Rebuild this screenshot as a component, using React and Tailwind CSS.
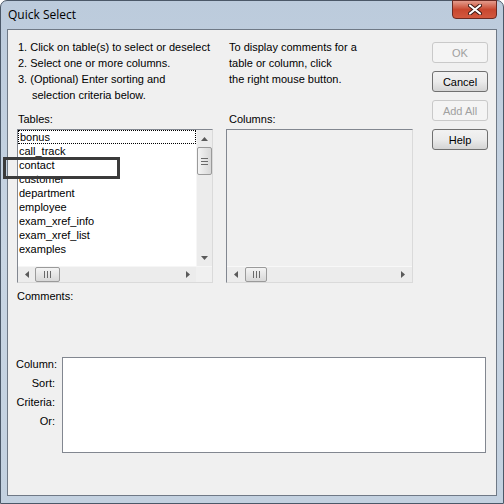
import React from 'react';

const tables = ['bonus', 'call_track', 'contact', 'customer', 'department', 'employee', 'exam_xref_info', 'exam_xref_list', 'examples'];

const Arrow = ({ dir }) => {
    const pts = {
        up: '0,4 3.5,0 7,4',
        down: '0,0 7,0 3.5,4',
        left: '4,0 4,7 0,3.5',
        right: '0,0 0,7 4,3.5',
    }[dir];
    const vertical = dir === 'up' || dir === 'down';
    return (
        <svg width={vertical ? 7 : 4} height={vertical ? 4 : 7} viewBox={vertical ? '0 0 7 4' : '0 0 4 7'}>
            <polygon points={pts} fill="#5a5a5a" />
        </svg>
    );
};

const VThumb = () => (
    <div className="w-[15px] h-[28px] rounded-[2px] border border-[#9a9a9a] bg-gradient-to-r from-[#f4f4f4] to-[#d8d8d8] flex flex-col items-center justify-center gap-[2px]">
        <div className="w-[7px] h-px bg-[#6a6a6a]"></div>
        <div className="w-[7px] h-px bg-[#6a6a6a]"></div>
        <div className="w-[7px] h-px bg-[#6a6a6a]"></div>
    </div>
);

const HThumb = ({ w }) => (
    <div className={`${w} h-[15px] rounded-[2px] border border-[#9a9a9a] bg-gradient-to-b from-[#f4f4f4] to-[#d8d8d8] flex items-center justify-center gap-[2px]`}>
        <div className="w-px h-[7px] bg-[#6a6a6a]"></div>
        <div className="w-px h-[7px] bg-[#6a6a6a]"></div>
        <div className="w-px h-[7px] bg-[#6a6a6a]"></div>
    </div>
);

const Button = ({ children, disabled }) => (
    <div className={`w-[56px] h-[21px] rounded-[3px] border flex items-center justify-center ${disabled ? 'border-[#c9c9c9] bg-[#f4f4f4] text-[#a0a0a0]' : 'border-[#707070] bg-gradient-to-b from-[#f2f2f2] via-[#ebebeb] to-[#d4d4d4] text-black'}`}>
        {children}
    </div>
);

export default function App() {
    return (
        <div className="w-[504px] h-[504px] relative overflow-hidden font-['Liberation_Sans',Arial,sans-serif] text-[11px] leading-[16px] text-black whitespace-nowrap">
            <div className="w-full h-full rounded-t-[7px] border border-[#4b5868] bg-gradient-to-b from-[#bccbdc] via-[#c8d5e3] to-[#c3d1e0] flex flex-col">
                {/* Title bar */}
                <div className="h-[28px] flex items-start justify-between shrink-0">
                    <div className="pl-[7px] pt-[6px] text-[12px] leading-[16px] font-['Open_Sans',sans-serif]">Quick Select</div>
                    <div className="w-[45px] h-[19px] mr-[6px] -mt-px rounded-b-[4px] border border-[#6b2a22] bg-gradient-to-b from-[#e39b8c] via-[#c8472f] to-[#d2583e] flex items-center justify-center">
                        <svg width="14" height="11" viewBox="0 0 14 11">
                            <path d="M2 1.5 L12 9.5 M12 1.5 L2 9.5" stroke="#3a1712" strokeWidth="4" strokeLinecap="round" />
                            <path d="M2 1.5 L12 9.5 M12 1.5 L2 9.5" stroke="#ffffff" strokeWidth="2.2" strokeLinecap="round" />
                        </svg>
                    </div>
                </div>

                {/* Client area */}
                <div className="mx-[6px] mb-[7px] flex-1 border border-[#6f7986] bg-[#f0f0f0] flex flex-col pl-[9px] pt-[9px]">
                    <div className="flex">
                        {/* Tables column */}
                        <div className="w-[196px] flex flex-col">
                            <div className="h-[72px] pl-px">
                                <div>1. Click on table(s) to select or deselect</div>
                                <div>2. Select one or more columns.</div>
                                <div>3. (Optional) Enter sorting and</div>
                                <div className="pl-[14px]">selection criteria below.</div>
                            </div>
                            <div className="h-[18px] pl-px">Tables:</div>
                            <div className="h-[154px] border border-t-[#828790] border-l-[#828790] border-r-[#dadada] border-b-[#dadada] bg-white flex flex-col">
                                <div className="flex flex-1 min-h-0">
                                    <div className="flex-1 flex flex-col leading-[14px]">
                                        {tables.map((t, i) => (
                                            <div key={t} className={`h-[14px] pl-px ${i === 0 ? 'border border-dotted border-black leading-[12px] pl-0' : ''}`}>{t}</div>
                                        ))}
                                    </div>
                                    <div className="w-[16px] bg-[#ececec] border-l border-[#f6f6f6] flex flex-col items-center">
                                        <div className="h-[17px] flex items-center"><Arrow dir="up" /></div>
                                        <VThumb />
                                        <div className="flex-1"></div>
                                        <div className="h-[17px] flex items-center"><Arrow dir="down" /></div>
                                    </div>
                                </div>
                                <div className="h-[16px] flex bg-[#ececec] border-t border-[#f6f6f6]">
                                    <div className="flex-1 flex items-center">
                                        <div className="w-[17px] flex justify-center"><Arrow dir="left" /></div>
                                        <HThumb w="w-[25px]" />
                                        <div className="flex-1"></div>
                                        <div className="w-[17px] flex justify-center"><Arrow dir="right" /></div>
                                    </div>
                                    <div className="w-[16px] bg-[#f0f0f0]"></div>
                                </div>
                            </div>
                        </div>

                        {/* Columns column */}
                        <div className="w-[187px] ml-[13px] flex flex-col">
                            <div className="h-[72px] pl-[3px]">
                                <div>To display comments for a</div>
                                <div>table or column, click</div>
                                <div>the right mouse button.</div>
                            </div>
                            <div className="h-[18px] pl-[3px]">Columns:</div>
                            <div className="h-[154px] border border-t-[#828790] border-l-[#828790] border-r-[#dadada] border-b-[#dadada] bg-[#f0f0f0] flex flex-col">
                                <div className="flex-1"></div>
                                <div className="h-[16px] flex items-center bg-[#ececec] border-t border-[#f8f8f8]">
                                    <div className="w-[18px] flex justify-center"><Arrow dir="left" /></div>
                                    <HThumb w="w-[22px]" />
                                    <div className="flex-1"></div>
                                    <div className="w-[18px] flex justify-center"><Arrow dir="right" /></div>
                                </div>
                            </div>
                        </div>

                        {/* Buttons */}
                        <div className="ml-[19px] pt-[3px] flex flex-col gap-[8px]">
                            <Button disabled>OK</Button>
                            <Button>Cancel</Button>
                            <Button disabled>Add All</Button>
                            <Button>Help</Button>
                        </div>
                    </div>

                    <div className="mt-[5px] h-[16px]">Comments:</div>

                    <div className="mt-[53px] flex items-start">
                        <div className="w-[43px] -mt-[2px] flex flex-col items-end leading-[19px]">
                            <div className="pr-[3px]">Column:</div>
                            <div className="pr-[5px]">Sort:</div>
                            <div className="pr-[5px]">Criteria:</div>
                            <div className="pr-[5px]">Or:</div>
                        </div>
                        <div className="ml-[2px] w-[424px] h-[96px] border border-[#828790] bg-white"></div>
                    </div>
                </div>
            </div>

            {/* highlight overlay around "contact" */}
            <div className="absolute left-[3px] top-[157px] w-[117px] h-[22px] border-[3px] border-[#3b3b3b]"></div>
        </div>
    );
}
